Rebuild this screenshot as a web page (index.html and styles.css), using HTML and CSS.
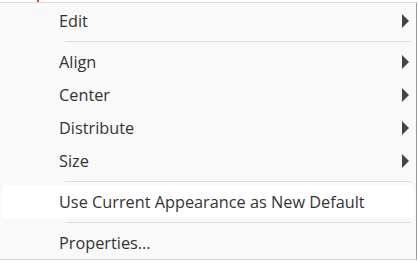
FILE: index.html
```html
<!DOCTYPE html>
<html>
  <head>
    <link rel="stylesheet" href="styles.css">
  </head>
  <body>
    <div class="mark"></div>
    <div class="menu">
      <div class="item"><span>Edit</span><span class="arrow"></span></div>
      <div class="sep"></div>
      <div class="item"><span>Align</span><span class="arrow"></span></div>
      <div class="item"><span>Center</span><span class="arrow"></span></div>
      <div class="item"><span>Distribute</span><span class="arrow"></span></div>
      <div class="item"><span>Size</span><span class="arrow"></span></div>
      <div class="sep"></div>
      <div class="item item-hover"><span>Use Current Appearance as New Default</span></div>
      <div class="sep"></div>
      <div class="item"><span>Properties...</span></div>
    </div>
  </body>
</html>
```
FILE: styles.css
```css
body{
  margin: 0;
  background-color: #ffffff;
  font-family: "Open Sans", "Noto Sans", sans-serif;
}
.mark{
  position: absolute;
  left: 37px;
  top: 0;
  width: 2px;
  height: 2px;
  background-color: #d24a1e;
}
.menu{
  margin-top: 2px;
  width: 417px;
  height: 258px;
  background-color: #f9f9f9;
  border-top: 1px solid #dadada;
  border-right: 1px solid #9a9a9a;
  border-bottom: 1px solid #d6d6d6;
  padding-top: 1px;
  box-sizing: border-box;
}
.item{
  display: flex;
  align-items: center;
  justify-content: space-between;
  height: 33px;
  margin: 0 2px;
  padding-left: 57px;
  padding-right: 5px;
  font-size: 16.3px;
  color: #333333;
}
.item-hover{
  background-color: #ffffff;
}
.arrow{
  width: 0;
  height: 0;
  border-top: 7px solid transparent;
  border-bottom: 7px solid transparent;
  border-left: 7px solid #444444;
}
.sep{
  height: 1px;
  margin: 4px 5px 3px 65px;
  background-color: #dedede;
}
```
